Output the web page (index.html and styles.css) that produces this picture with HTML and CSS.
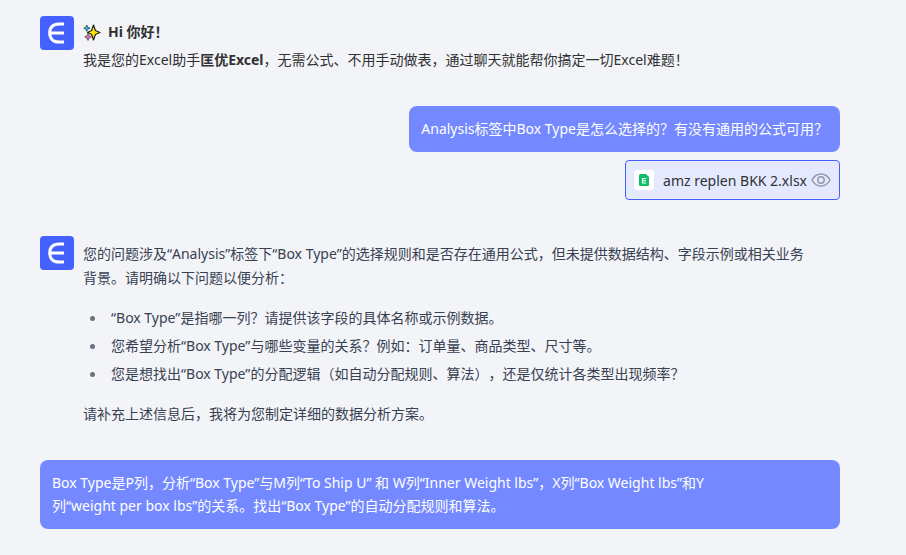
FILE: index.html
```html
<!DOCTYPE html>
<html lang="zh-CN">
<head>
    <meta charset="UTF-8">
    <meta name="viewport" content="width=device-width, initial-scale=1.0">
    <title>匡优Excel</title>
    <link rel="stylesheet" href="styles.css">
</head>
<body>
    <main class="chat">
        <section class="message bot">
            <svg class="avatar" viewBox="0 0 34 34" aria-hidden="true">
                <rect width="34" height="34" rx="4" fill="#4461ff"/>
                <path d="M24 8h-5C13 8 9.700 11.500 9.700 17S13 26 19 26h5M10 17h14" fill="none" stroke="#fff" stroke-width="3"/>
            </svg>
            <div class="welcome">
                <p class="hello">
                    <svg class="sparkles" viewBox="0 0 18 18" aria-hidden="true">
                        <path d="M10.500 2L12.400 7.500l4.600 2-4.600 2-1.900 5.500-1.900-5.500-4.100-2 4.100-2z" fill="#ffe500" stroke="#222" stroke-width="1.200" stroke-linejoin="round"/>
                        <path d="M3.800 2l1 2.200L7 5.200l-2.200 1-1 2.300-1-2.300-2.100-1 2.100-1z" fill="#22b8e8" stroke="#222" stroke-width=".6" stroke-linejoin="round"/>
                        <path d="M5 10.500l1.100 2.300 2.200 1.100-2.200 1.100-1.100 2.400-1.100-2.400-2.200-1.100 2.200-1.100z" fill="#f06fae" stroke="#222" stroke-width=".6" stroke-linejoin="round"/>
                    </svg>
                    <strong>Hi 你好！</strong>
                </p>
                <p>我是您的Excel助手<strong>匡优Excel</strong>，无需公式、不用手动做表，通过聊天就能帮你搞定一切Excel难题！</p>
            </div>
        </section>

        <section class="message user">
            <p class="bubble">Analysis标签中Box Type是怎么选择的？有没有通用的公式可用？</p>
            <div class="file">
                <svg class="file-icon" viewBox="0 0 20 20" aria-hidden="true">
                    <rect width="20" height="20" rx="3" fill="#fff"/>
                    <path d="M6.500 4H12l3 3v7.500a1.500 1.500 0 0 1-1.500 1.500h-7A1.500 1.500 0 0 1 5 14.500v-9A1.500 1.500 0 0 1 6.500 4z" fill="#0bbf6a"/>
                    <path d="M12.200 8.500H8.500v4.500h3.700M8.500 10.700h3.400" fill="none" stroke="#fff" stroke-width="1.200"/>
                </svg>
                <span class="file-name">amz replen BKK 2.xlsx</span>
                <button type="button" class="preview" aria-label="预览">
                    <svg viewBox="0 0 20 20" fill="none" stroke="#9699a8" stroke-width="1.500">
                        <path d="M1 10c2-3.900 5.200-6 9-6s7 2.100 9 6c-2 3.900-5.200 6-9 6s-7-2.100-9-6z"/>
                        <circle cx="10" cy="10" r="3.200"/>
                    </svg>
                </button>
            </div>
        </section>

        <section class="message bot">
            <svg class="avatar" viewBox="0 0 34 34" aria-hidden="true">
                <rect width="34" height="34" rx="4" fill="#4461ff"/>
                <path d="M24 8h-5C13 8 9.700 11.500 9.700 17S13 26 19 26h5M10 17h14" fill="none" stroke="#fff" stroke-width="3"/>
            </svg>
            <div class="answer">
                <p>您的问题涉及“Analysis”标签下“Box Type”的选择规则和是否存在通用公式，但未提供数据结构、字段示例或相关业务背景。请明确以下问题以便分析：</p>
                <ul>
                    <li>“Box Type”是指哪一列？请提供该字段的具体名称或示例数据。</li>
                    <li>您希望分析“Box Type”与哪些变量的关系？例如：订单量、商品类型、尺寸等。</li>
                    <li>您是想找出“Box Type”的分配逻辑（如自动分配规则、算法），还是仅统计各类型出现频率？</li>
                </ul>
                <p>请补充上述信息后，我将为您制定详细的数据分析方案。</p>
            </div>
        </section>

        <section class="message user">
            <p class="bubble">Box Type是P列，分析“Box Type”与M列“To Ship U” 和 W列“Inner Weight lbs”，X列“Box Weight lbs”和Y<br>列“weight per box lbs”的关系。找出“Box Type”的自动分配规则和算法。</p>
        </section>
    </main>
</body>
</html>
```
FILE: styles.css
```css
body {
    margin: 0;
    background-color: #f3f4f8;
    color: #303133;
    font-family: "Noto Sans", "Noto Sans CJK SC", sans-serif;
    font-size: 14px;
    text-spacing-trim: space-all;
}

p,
ul {
    margin: 0;
}

.chat {
    padding: 16px 66px 26px 40px;
}

.message {
    display: flex;
}

.bot {
    gap: 9px;
}

.avatar {
    flex: none;
    width: 34px;
    height: 34px;
}

.welcome {
    padding: 2px 0 32px;
    line-height: 28px;
}

.hello {
    display: flex;
    align-items: center;
    gap: 7px;
}

.sparkles {
    width: 18px;
    height: 18px;
}

.user {
    flex-direction: column;
    align-items: flex-end;
    gap: 8px;
}

.bubble {
    padding: 11px 12px 12px;
    border-radius: 8px;
    background-color: #7489ff;
    color: #fff;
    line-height: 23px;
}

.user:last-child .bubble {
    align-self: stretch;
}

.file {
    display: flex;
    align-items: center;
    height: 38px;
    padding: 0 8px;
    margin-bottom: 36px;
    border: 1px solid #4461ff;
    border-radius: 4px;
    background-color: #e5e9ff;
}

.file-icon {
    width: 20px;
    height: 20px;
    margin-right: 9px;
}

.preview {
    width: 20px;
    height: 20px;
    margin-left: 4px;
    padding: 0;
    border: none;
    background: none;
    cursor: pointer;
}

.preview svg {
    display: block;
}

.answer {
    padding: 6px 24px 34px 0;
    color: #374151;
    line-height: 24px;
}

.answer ul {
    margin: 14px 0;
    padding-left: 7px;
    list-style: none;
}

.answer li {
    display: flex;
    align-items: center;
    gap: 16px;
    line-height: 28px;
}

.answer li::before {
    content: "";
    flex: none;
    width: 5px;
    height: 5px;
    border-radius: 50%;
    background-color: #6b7280;
}
```
